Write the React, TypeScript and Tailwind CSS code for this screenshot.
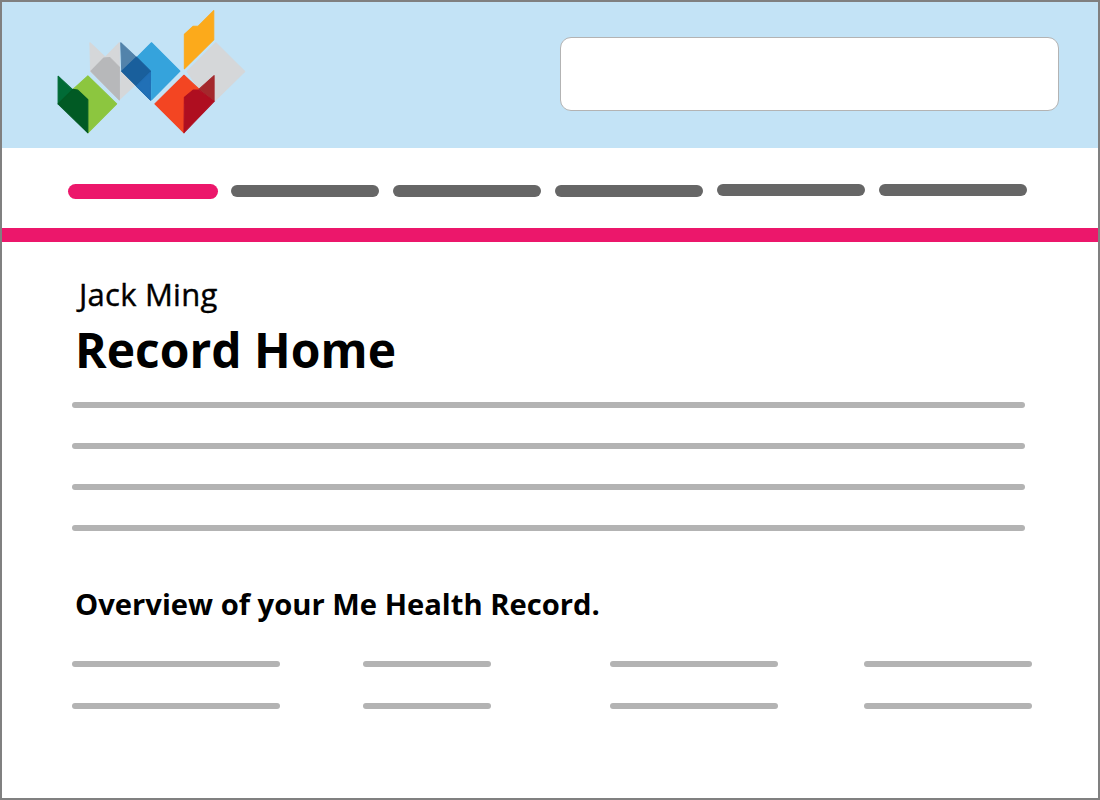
const navItems = [
  { width: "w-[148px]", nudge: "mt-[1px]" },
  { width: "w-[148px]", nudge: "mt-[1px]" },
  { width: "w-[148px]", nudge: "mt-[1px]" },
  { width: "w-[148px]", nudge: "mt-0" },
  { width: "w-[148px]", nudge: "mt-0" },
];

const columns = ["w-[208px] mr-[83px]", "w-[128px] mr-[119px]", "w-[168px] mr-[86px]", "w-[168px]"];

function Logo() {
  return (
    <svg viewBox="0 0 660 435" className="-mt-[2px] h-[146px] w-[221px] shrink-0" strokeLinejoin="round" strokeWidth="3">
      <path d="M149 127 L195 170 L237 127 L237 298 L151 212 Z" fill="#d5d7d9" stroke="#d5d7d9" />
      <path d="M238 127 L285 170 L240 212 L238 298 L284 255 Z" fill="#d5d7d9" />
      <path d="M152 212 L190 173 L208 171 L237 200 L237 298 Z" fill="#b7b8ba" stroke="#b7b8ba" />
      <path d="M241 127 L287 170 L330 215 L330 298 L244 212 Z" fill="#5283ab" stroke="#5283ab" />
      <path d="M333 127 L418 212 L333 298 L331 215 L290 170 Z" fill="#35a3dc" stroke="#35a3dc" />
      <path d="M244 212 L288 170 L330 212 L330 298 Z" fill="#195f9c" stroke="#195f9c" />
      <path d="M330 215 L330 298 L288 257 Z" fill="#2170b6" stroke="#2170b6" />
      <path d="M525 127 L612 213 L523 300 L521 225 L475 265 L439 213 Z" fill="#d5d7d9" stroke="#d5d7d9" />
      <path d="M431 102 L457 78 L472 78 L519 31 L519 118 L431 205 Z" fill="#fcaa1b" stroke="#fcaa1b" />
      <path d="M430 224 L475 266 L430 310 L430 396 L343 310 Z" fill="#f34522" stroke="#f34522" />
      <path d="M475 266 L520 225 L520 302 Z" fill="#a4282c" stroke="#a4282c" />
      <path d="M431 290 L458 268 L475 268 L497 285 L520 302 L430 396 Z" fill="#af0e20" stroke="#af0e20" />
      <path d="M143 226 L229 310 L143 396 L143 298 L100 265 Z" fill="#8cc63f" stroke="#8cc63f" />
      <path d="M54 227 L98 268 L54 310 Z" fill="#006b36" stroke="#006b36" />
      <path d="M54 310 L98 266 L112 268 L143 297 L143 396 Z" fill="#015a24" stroke="#015a24" />
    </svg>
  );
}

function GreyLine({ className }: { className: string }) {
  return <div className={`h-[6px] rounded-full bg-[#b3b3b3] ${className}`} />;
}

export default function App() {
  return (
    <div className="h-[800px] w-[1100px] overflow-hidden border-2 border-[#808080] bg-white font-['Open_Sans',sans-serif] text-black">
      <header className="flex h-[146px] items-start bg-[#c3e3f6] pl-[38px]">
        <Logo />
        <div className="ml-[299px] mt-[35px] h-[74px] w-[499px] rounded-[11px] border border-[#b3b3b3] bg-white" />
      </header>

      <nav className="flex h-[80px] items-start gap-[14px] pl-[66px] pt-[36px]">
        <div className="mr-[-1px] h-[15px] w-[150px] rounded-full bg-[#ec176b]" />
        {navItems.map((item, i) => (
          <div key={i} className={`h-[12px] rounded-full bg-[#666666] ${item.width} ${item.nudge}`} />
        ))}
      </nav>
      <div className="h-[14px] bg-[#ec176b]" />

      <main className="pl-[70px]">
        <p className="ml-[7px] mt-[31px] text-[31px] leading-[42px] tracking-[0.25px] [-webkit-text-stroke:0.4px_black]">Jack Ming</p>
        <h1 className="ml-[3px] mt-[2px] text-[48px] font-bold leading-[65px]">Record Home</h1>
        <div className="mt-[20px] flex flex-col gap-[35px]">
          <GreyLine className="w-[953px]" />
          <GreyLine className="w-[953px]" />
          <GreyLine className="w-[953px]" />
          <GreyLine className="w-[953px]" />
        </div>
        <h2 className="ml-[3px] mt-[53px] text-[29.2px] font-bold leading-[40px]">Overview of your Me Health Record.</h2>
        <div className="mt-[37px] flex flex-col gap-[36px]">
          {[0, 1].map((row) => (
            <div key={row} className="flex">
              {columns.map((col, i) => (
                <GreyLine key={i} className={col} />
              ))}
            </div>
          ))}
        </div>
      </main>
    </div>
  );
}
